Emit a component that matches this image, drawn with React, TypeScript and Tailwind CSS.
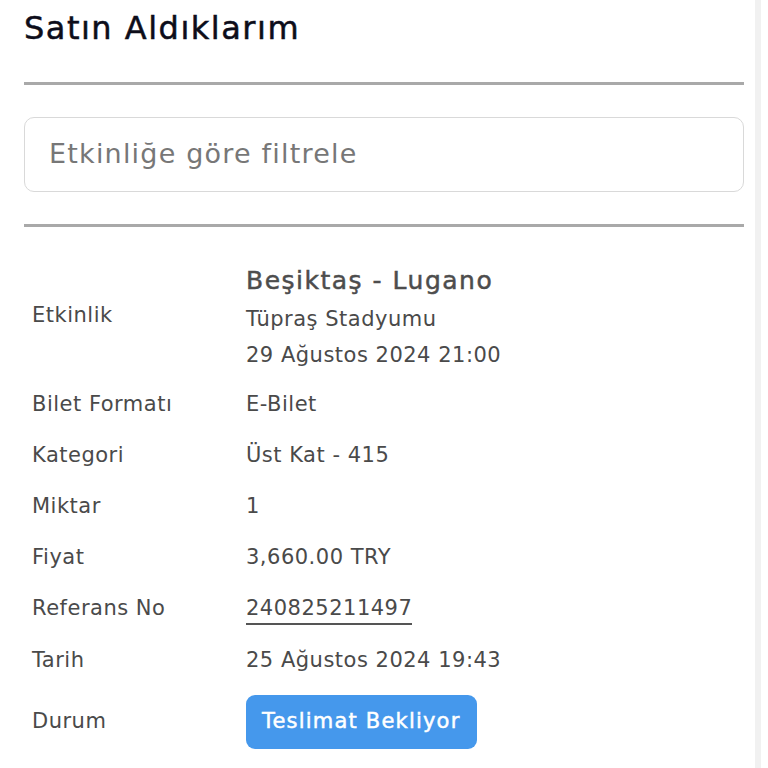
const ROWS = [
  { label: "Bilet Formatı", value: "E-Bilet" },
  { label: "Kategori", value: "Üst Kat - 415" },
  { label: "Miktar", value: "1" },
  { label: "Fiyat", value: "3,660.00 TRY" },
];

const medium = "[-webkit-text-stroke:0.5px_currentColor]";

export default function App() {
  return (
    <div className="flex h-[768px] w-[768px] bg-white font-['DejaVu_Sans',sans-serif]">
      <div className="w-[755px] px-6">
        <h1 className={`pt-[6px] text-[32px] leading-[44px] tracking-[1.5px] text-[#0d0d1a] ${medium}`}>Satın Aldıklarım</h1>
        <div className="mt-[32px] h-[3px] w-[720px] bg-[#a9a9a9]" />
        <div className="mt-[32px] flex h-[75px] w-[720px] items-center rounded-[10px] border border-[#d9d9d9] px-6">
          <span className="text-[27px] tracking-[1.2px] text-[#777]">Etkinliğe göre filtrele</span>
        </div>
        <div className="mt-[32px] h-[3px] w-[720px] bg-[#a9a9a9]" />

        <div className="mt-[32px] pl-2 text-[21px] tracking-[0.5px] text-[#4a4a4a]">
          <div className="flex items-center">
            <div className="w-[214px]">Etkinlik</div>
            <div className="flex flex-col pt-[2px]">
              <span className={`text-[25px] leading-[40px] tracking-[1.5px] text-[#4d4d4d] ${medium}`}>Beşiktaş - Lugano</span>
              <span className="leading-[36px]">Tüpraş Stadyumu</span>
              <span className="leading-[36px]">29 Ağustos 2024 21:00</span>
            </div>
          </div>
          <div className="mt-[6px] flex flex-col">
            {ROWS.map(({ label, value }) => (
              <div key={label} className="flex h-[51px] items-center">
                <div className="w-[214px]">{label}</div>
                <div>{value}</div>
              </div>
            ))}
            <div className="flex h-[51px] items-center">
              <div className="w-[214px]">Referans No</div>
              <div className="border-b-2 border-[#555] leading-[30px]">240825211497</div>
            </div>
            <div className="flex h-[53px] items-center">
              <div className="w-[214px]">Tarih</div>
              <div>25 Ağustos 2024 19:43</div>
            </div>
            <div className="mt-[8px] flex items-center">
              <div className="w-[214px]">Durum</div>
              <div className={`flex h-[54px] items-center rounded-[9px] bg-[#4598ec] px-4 text-[21px] tracking-[1.2px] text-white ${medium}`}>
                Teslimat Bekliyor
              </div>
            </div>
          </div>
        </div>
      </div>
      <div className="w-[6px] bg-[#f1f1f1]" />
    </div>
  );
}
